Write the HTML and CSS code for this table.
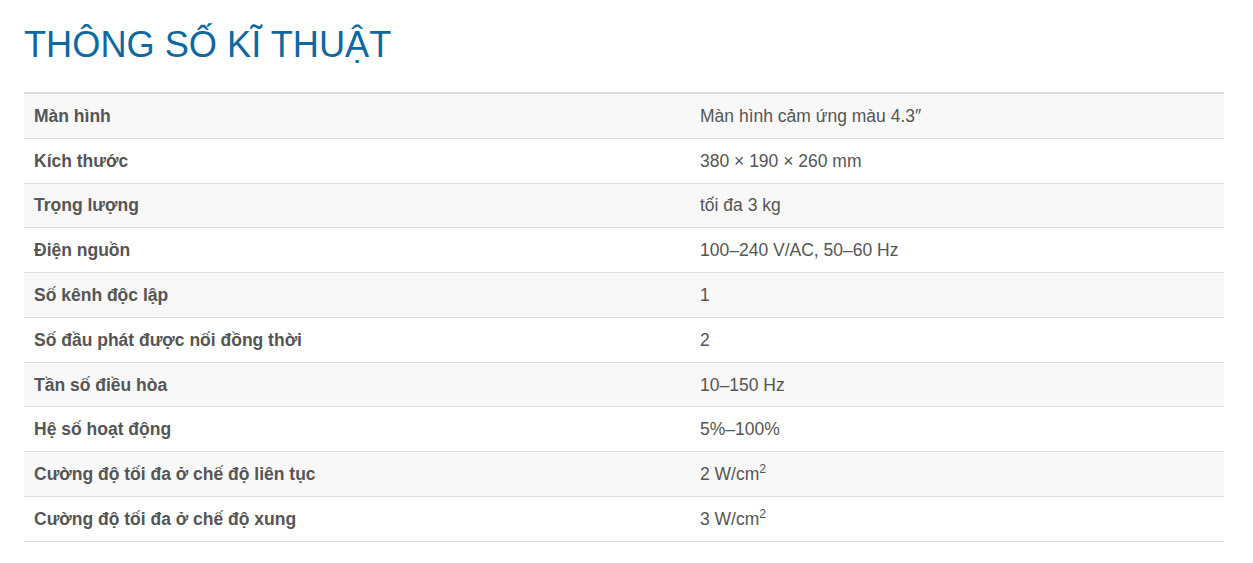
FILE: index.html
```html
<!DOCTYPE html>
<html lang="vi">
<head>
<meta charset="utf-8">
<title>Thông số kĩ thuật</title>
<link rel="stylesheet" href="styles.css">
</head>
<body>
<div class="page">
  <h1 class="title">THÔNG SỐ KĨ THUẬT</h1>
  <table class="specs">
    <tbody>
      <tr><th>Màn hình</th><td>Màn hình cảm ứng màu 4.3″</td></tr>
      <tr><th>Kích thước</th><td>380 × 190 × 260 mm</td></tr>
      <tr><th>Trọng lượng</th><td>tối đa 3 kg</td></tr>
      <tr><th>Điện nguồn</th><td>100–240 V/AC, 50–60 Hz</td></tr>
      <tr><th>Số kênh độc lập</th><td>1</td></tr>
      <tr><th>Số đầu phát được nối đồng thời</th><td>2</td></tr>
      <tr><th>Tần số điều hòa</th><td>10–150 Hz</td></tr>
      <tr><th>Hệ số hoạt động</th><td>5%–100%</td></tr>
      <tr><th>Cường độ tối đa ở chế độ liên tục</th><td>2 W/cm<sup>2</sup></td></tr>
      <tr><th>Cường độ tối đa ở chế độ xung</th><td>3 W/cm<sup>2</sup></td></tr>
    </tbody>
  </table>
</div>
</body>
</html>
```
FILE: styles.css
```css
html, body {
  margin: 0;
  padding: 0;
  background: #fff;
}
.page {
  padding: 25px 29px 0 24px;
  font-family: "Liberation Sans", Arial, sans-serif;
  color: #555;
}
.title {
  margin: 0 0 27px 0;
  font-size: 36.2px;
  line-height: 40px;
  font-weight: normal;
  color: #0e68a3;
}
.specs {
  width: 1200px;
  border-collapse: collapse;
  border-spacing: 0;
  border-top: 2px solid #ddd;
  font-size: 17.5px;
}
.specs th, .specs td {
  padding: 9.9px 10px;
  line-height: 24px;
  text-align: left;
  vertical-align: top;
  border-bottom: 1px solid #ddd;
}
.specs th {
  width: 646px;
  font-weight: bold;
  color: #555;
}
.specs td {
  font-weight: normal;
  color: #555;
}
.specs tr:nth-child(odd) {
  background: #f8f8f8;
}
.specs sup {
  font-size: 70%;
  line-height: 0;
  position: relative;
  vertical-align: baseline;
  top: -0.55em;
}
```
